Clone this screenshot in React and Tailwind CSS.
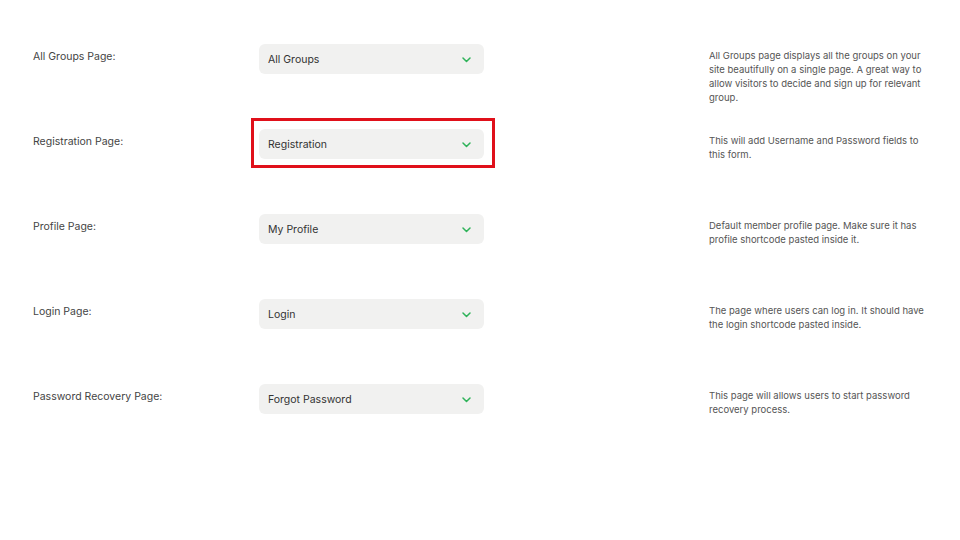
import React from 'react';

const rows = [
  { label: 'All Groups Page:', value: 'All Groups', desc: 'All Groups page displays all the groups on your site beautifully on a single page. A great way to allow visitors to decide and sign up for relevant group.' },
  { label: 'Registration Page:', value: 'Registration', desc: 'This will add Username and Password fields to this form.', highlight: true },
  { label: 'Profile Page:', value: 'My Profile', desc: 'Default member profile page. Make sure it has profile shortcode pasted inside it.' },
  { label: 'Login Page:', value: 'Login', desc: 'The page where users can log in. It should have the login shortcode pasted inside.' },
  { label: 'Password Recovery Page:', value: 'Forgot Password', desc: 'This page will allows users to start password recovery process.' },
];

const Chevron = () => (
  <svg width="9" height="6" viewBox="0 0 9 6" fill="none">
    <path d="M1 1l3.5 3.5L8 1" stroke="#2fb35a" strokeWidth="1.5" strokeLinecap="round" strokeLinejoin="round" />
  </svg>
);

export default function App() {
  return (
    <div className="w-[960px] h-[540px] bg-white pt-[44px]" style={{ fontFamily: 'Inter, "Noto Sans", sans-serif' }}>
      {rows.map((r) => (
        <div key={r.label} className="flex items-start h-[85px]">
          <div className="w-[259px] shrink-0 pl-[33px] pt-[6px] text-[10.5px] leading-[14px] text-[#444]">{r.label}</div>
          <div className="relative w-[450px] shrink-0">
            <div className="w-[225px] h-[30px] bg-[#f1f1f0] rounded-md flex items-center justify-between pl-[9px] pr-[13px] pt-px">
              <span className="text-[10.5px] text-[#333]">{r.value}</span>
              <Chevron />
            </div>
            {r.highlight && (
              <div className="absolute left-[-8px] top-[-11px] w-[244px] h-[50px] border-[3px] border-[#e0101a]" />
            )}
          </div>
          <div className="w-[218px] pt-[5px] text-[9.5px] leading-[14px] text-[#555]">{r.desc}</div>
        </div>
      ))}
    </div>
  );
}
